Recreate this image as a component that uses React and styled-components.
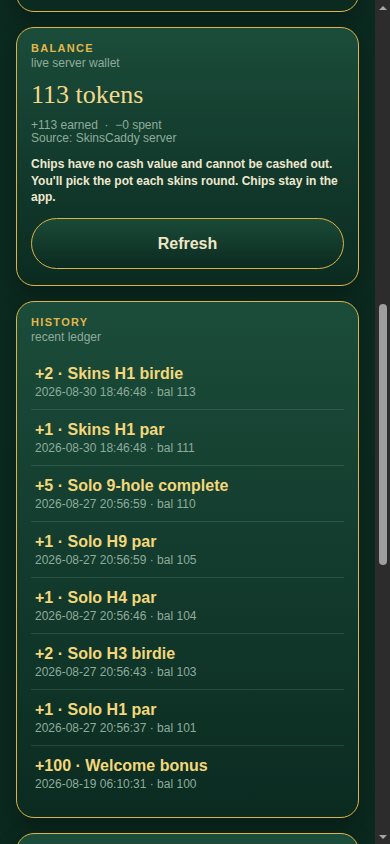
import React, { useLayoutEffect, useRef } from "react";
import styled, { createGlobalStyle } from "styled-components";

const GlobalStyle = createGlobalStyle`
  :root {
    color-scheme: dark;
  }
  html, body {
    margin: 0;
    padding: 0;
    background: #0b2a20;
    font-family: "Liberation Sans", Arial, sans-serif;
    scroll-behavior: auto;
  }
  * {
    box-sizing: border-box;
  }
`;

const Page = styled.main`
  display: flex;
  flex-direction: column;
  gap: 15px;
  padding: 16px 31px 16px 16px;
  background: linear-gradient(180deg, #0c2b21 0%, #0a281e 100%);
`;

const Card = styled.section`
  min-height: ${({ $minH }) => ($minH ? `${$minH}px` : "0")};
  padding: 13px 14px 16px;
  border: 1px solid #deb345;
  border-radius: 18px;
  background: linear-gradient(180deg, #1b4c3a 0%, #0b2b21 100%);
  box-shadow: 0 8px 22px rgba(0, 0, 0, 0.28);
  display: flex;
  flex-direction: column;
`;

const Label = styled.div`
  font-size: 11px;
  line-height: 14px;
  font-weight: 700;
  letter-spacing: 0.12em;
  text-transform: uppercase;
  color: #e2b74a;
`;

const Sub = styled.div`
  font-size: 12px;
  line-height: 16px;
  color: #8fac9b;
`;

const Amount = styled.div`
  margin-top: 8px;
  font-family: "Liberation Serif", "Times New Roman", serif;
  font-size: 26px;
  line-height: 31px;
  color: #f3d98a;
`;

const Meta = styled.div`
  margin-top: 9px;
  font-size: 12px;
  line-height: 1.12;
  color: #8fac9b;
`;

const Note = styled.p`
  margin: 10px 0 12px;
  font-size: 12px;
  line-height: 1.4;
  font-weight: 700;
  color: #efe7cf;
`;

const RefreshButton = styled.button`
  height: 51px;
  width: 100%;
  border: 1px solid #deb345;
  border-radius: 999px;
  background: linear-gradient(180deg, #1a4a37 0%, #0b2b20 100%);
  color: #efe6c8;
  font-family: "Liberation Sans", Arial, sans-serif;
  font-size: 16px;
  font-weight: 700;
  cursor: pointer;
`;

const Ledger = styled.ul`
  list-style: none;
  margin: 9px 0 0;
  padding: 0;
`;

const Entry = styled.li`
  padding: 10px 4px 9px;
  border-bottom: 1px solid rgba(170, 205, 185, 0.16);
  &:last-child {
    border-bottom: none;
  }
`;

const EntryTitle = styled.div`
  font-size: 16px;
  line-height: 20px;
  font-weight: 700;
  color: #f3d77a;
`;

const EntryMeta = styled.div`
  font-size: 12px;
  line-height: 16px;
  color: #8fac9b;
`;

const ScrollBar = styled.div`
  position: fixed;
  top: 0;
  right: 0;
  width: 15px;
  height: 100vh;
  background: #2c2c2c;
  display: flex;
  flex-direction: column;
  align-items: center;
`;

const Arrow = styled.div`
  flex: 0 0 15px;
  width: 15px;
  display: flex;
  align-items: center;
  justify-content: center;
  &::before {
    content: "";
    border-left: 4px solid transparent;
    border-right: 4px solid transparent;
    ${({ $down }) =>
      $down
        ? "border-top: 4px solid #a6a6a6;"
        : "border-bottom: 4px solid #a6a6a6;"}
  }
`;

const Track = styled.div`
  flex: 1;
  width: 15px;
  display: flex;
  justify-content: center;
`;

const Thumb = styled.div`
  margin-top: ${({ $top }) => $top}px;
  width: 8px;
  height: ${({ $size }) => $size}px;
  border-radius: 4px;
  background: #9e9e9e;
`;

const history = [
  { delta: "+2", what: "Skins H1 birdie", at: "2026-08-30 18:46:48", bal: 113 },
  { delta: "+1", what: "Skins H1 par", at: "2026-08-30 18:46:48", bal: 111 },
  { delta: "+5", what: "Solo 9-hole complete", at: "2026-08-27 20:56:59", bal: 110 },
  { delta: "+1", what: "Solo H9 par", at: "2026-08-27 20:56:59", bal: 105 },
  { delta: "+1", what: "Solo H4 par", at: "2026-08-27 20:56:46", bal: 104 },
  { delta: "+2", what: "Solo H3 birdie", at: "2026-08-27 20:56:43", bal: 103 },
  { delta: "+1", what: "Solo H1 par", at: "2026-08-27 20:56:37", bal: 101 },
  { delta: "+100", what: "Welcome bonus", at: "2026-08-19 06:10:31", bal: 100 },
];

export default function App() {
  const balanceRef = useRef(null);

  useLayoutEffect(() => {
    const el = balanceRef.current;
    if (!el) return;
    const top = el.getBoundingClientRect().top + window.scrollY;
    window.scrollTo(0, top - 27);
  }, []);

  return (
    <>
      <GlobalStyle />
      <Page>
        <Card $minH={930}>
          <Label>Wallet</Label>
          <Sub>SkinsCaddy chips</Sub>
        </Card>

        <Card ref={balanceRef}>
          <Label>Balance</Label>
          <Sub>live server wallet</Sub>
          <Amount>113 tokens</Amount>
          <Meta>
            +113 earned &nbsp;·&nbsp; −0 spent
            <br />
            Source: SkinsCaddy server
          </Meta>
          <Note>
            Chips have no cash value and cannot be cashed out. You'll pick the
            pot each skins round. Chips stay in the app.
          </Note>
          <RefreshButton type="button">Refresh</RefreshButton>
        </Card>

        <Card>
          <Label>History</Label>
          <Sub>recent ledger</Sub>
          <Ledger>
            {history.map((h, i) => (
              <Entry key={i}>
                <EntryTitle>
                  {h.delta} · {h.what}
                </EntryTitle>
                <EntryMeta>
                  {h.at} · bal {h.bal}
                </EntryMeta>
              </Entry>
            ))}
          </Ledger>
        </Card>

        <Card $minH={850}>
          <Label>About chips</Label>
          <Sub>how chips work</Sub>
        </Card>
      </Page>

      <ScrollBar aria-hidden="true">
        <Arrow />
        <Track>
          <Thumb $top={289} $size={261} />
        </Track>
        <Arrow $down />
      </ScrollBar>
    </>
  );
}
